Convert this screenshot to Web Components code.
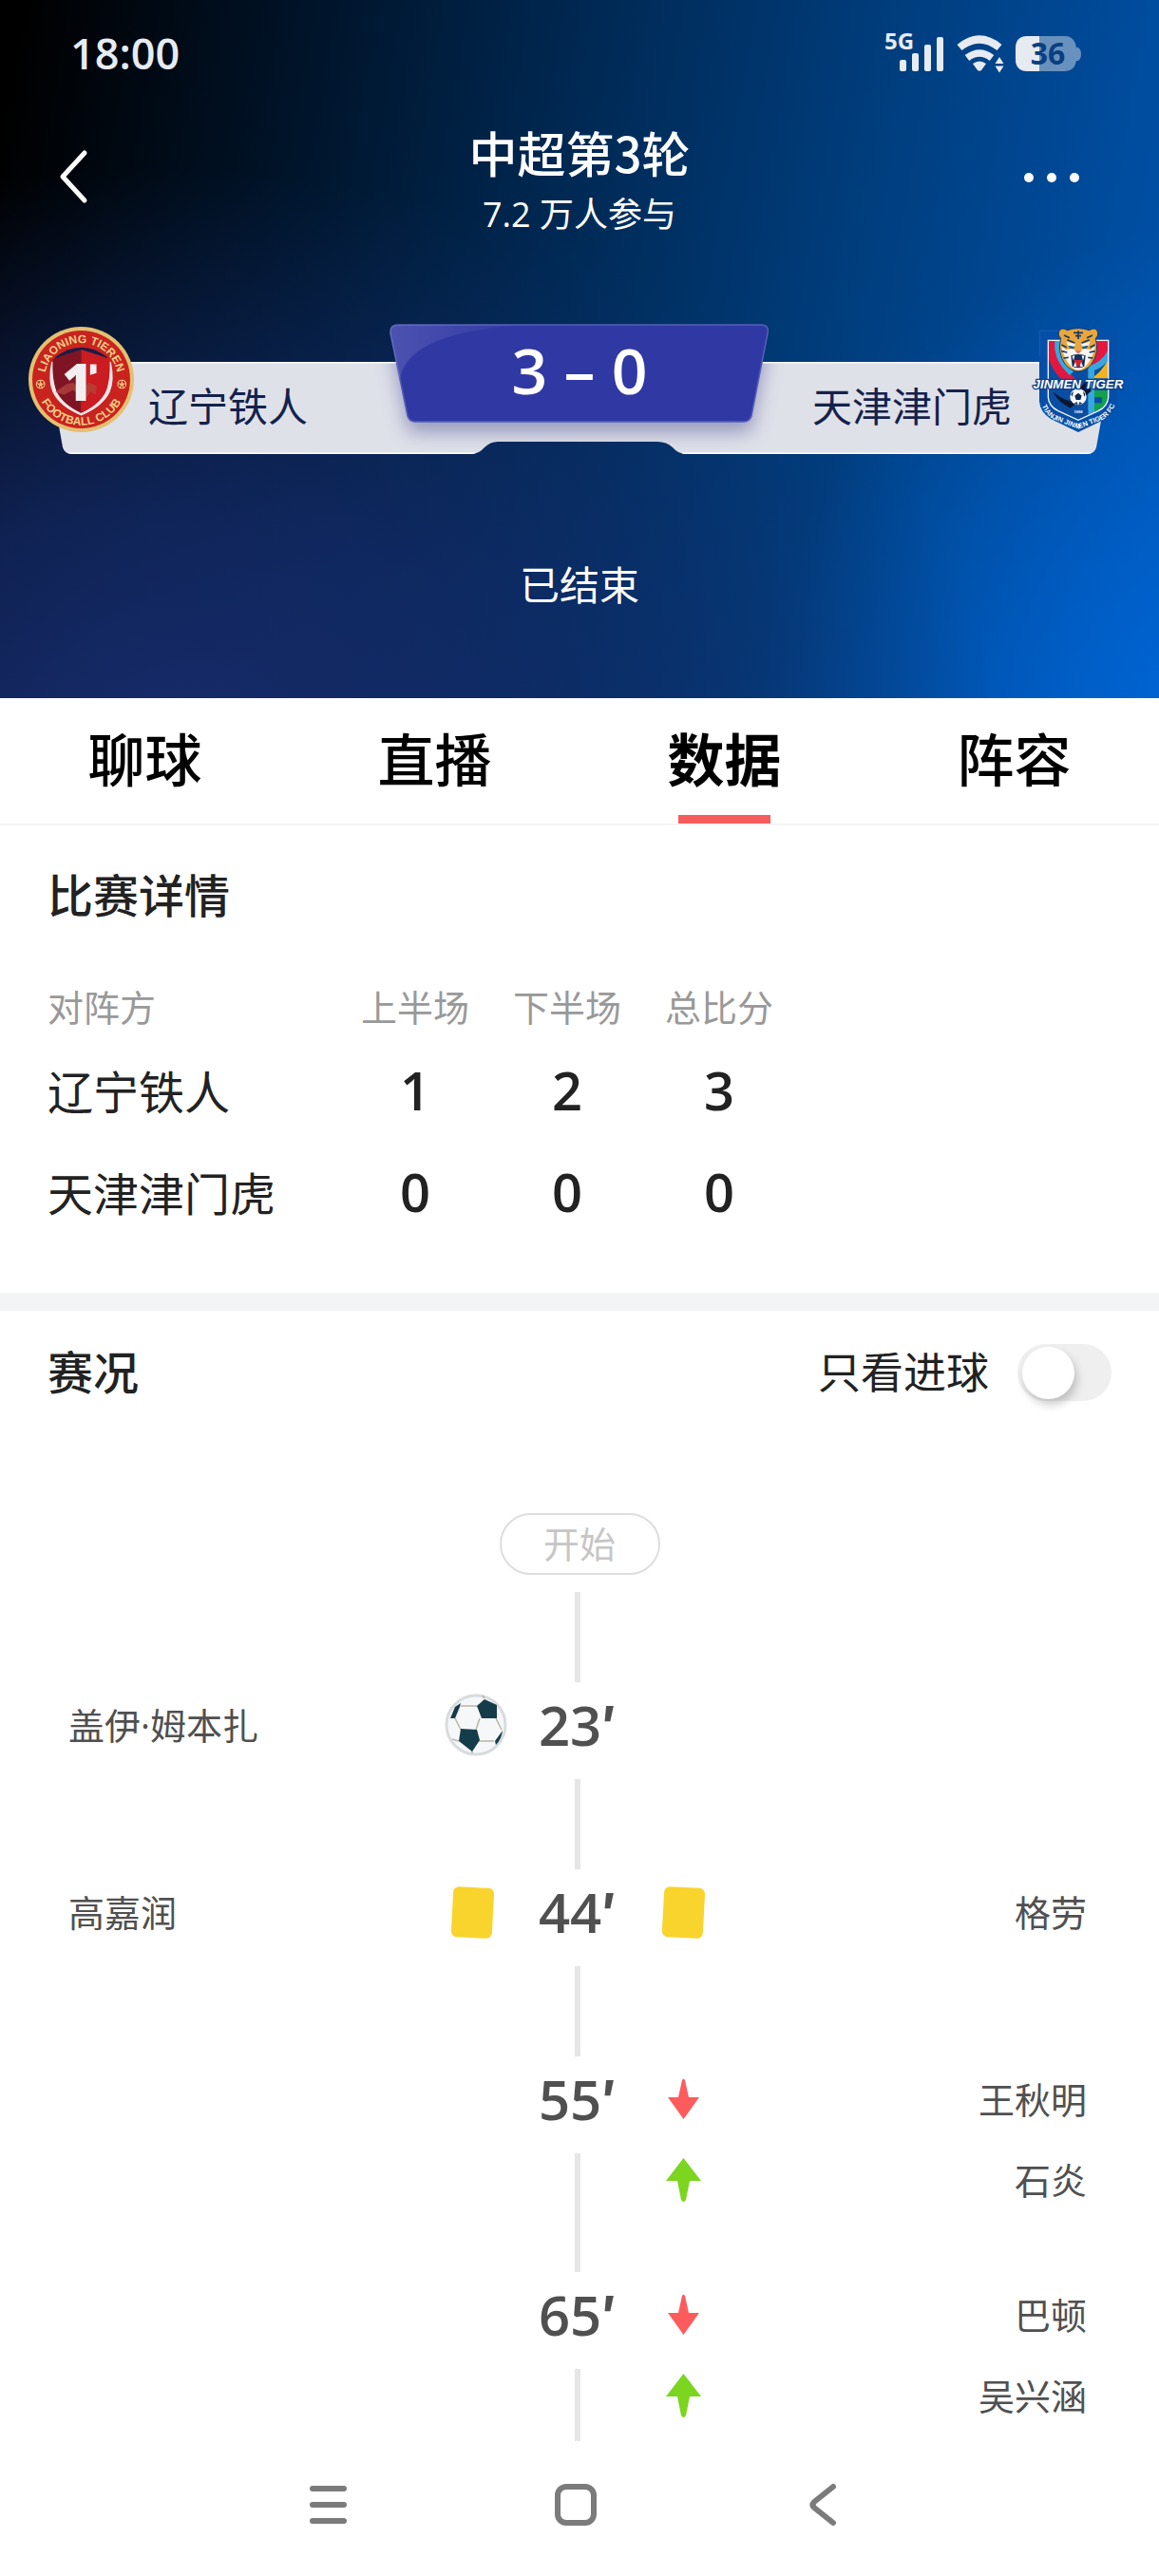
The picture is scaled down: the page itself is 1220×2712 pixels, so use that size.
<!DOCTYPE html>
<html lang="zh-CN">
<head>
<meta charset="utf-8">
<meta name="viewport" content="width=device-width, initial-scale=1">
<title>中超第3轮</title>
<style>
    html, body {
        margin: 0;
        height: 100%;
        background: #fff;
    }
    body {
        font-family: "Open Sans", "Noto Sans CJK SC", sans-serif;
        color: #222;
    }
</style>
</head>
<body>
<match-page>
    <status-bar slot="header" time="18:00" battery="36"></status-bar>
    <title-bar slot="header">
        中超第3轮
        <span slot="sub">7.2 万人参与</span>
    </title-bar>
    <score-board slot="header" score="3 – 0">
        <liaoning-badge slot="home-badge"></liaoning-badge>
        <span slot="home">辽宁铁人</span>
        <span slot="away">天津津门虎</span>
        <tianjin-badge slot="away-badge"></tianjin-badge>
        <span slot="state">已结束</span>
    </score-board>
    <tab-bar tabs="聊球,直播,数据,阵容" active="数据"></tab-bar>
    <match-details></match-details>
    <match-timeline>
        <timeline-event time="23">
            <timeline-player slot="home" icon="goal">盖伊·姆本扎</timeline-player>
        </timeline-event>
        <timeline-event time="44">
            <timeline-player slot="home" icon="card">高嘉润</timeline-player>
            <timeline-player slot="away" icon="card">格劳</timeline-player>
        </timeline-event>
        <timeline-event time="55">
            <timeline-player slot="away" icon="down">王秋明</timeline-player>
            <timeline-player slot="away" icon="up">石炎</timeline-player>
        </timeline-event>
        <timeline-event time="65">
            <timeline-player slot="away" icon="down">巴顿</timeline-player>
            <timeline-player slot="away" icon="up">吴兴涵</timeline-player>
        </timeline-event>
    </match-timeline>
    <system-nav slot="nav"></system-nav>
</match-page>

<script>
class BaseElement extends HTMLElement {

    connectedCallback() {
        if (!this.shadowRoot)
            this.attachShadow({mode: 'open'}).innerHTML = this.template;
    }
}

class MatchPage extends BaseElement {
    get template() {
        return `
        <style>
            :host {
                display: flex;
                flex-direction: column;
                height: 100vh;
            }
            header {
                flex: none;
                color: #fff;
                background:
                    radial-gradient(ellipse 72% 82% at 14% 106%, rgba(24, 44, 110, .95), rgba(20, 43, 106, .75) 40%, rgba(10, 40, 96, 0)),
                    radial-gradient(ellipse 40% 72% at 106% 104%, #0066d8, rgba(0, 96, 204, 0)),
                    linear-gradient(100deg, #000 2%, #00142a 25%, #002a56 48%, #003f80 72%, #0053ae);
            }
            main {
                flex: 1;
                min-height: 0;
                overflow: hidden;
            }
        </style>
        <header><slot name="header"></slot></header>
        <main><slot></slot></main>
        <slot name="nav"></slot>
        `;
    }
}

class StatusBar extends BaseElement {
    get template() {
        return `
        <style>
            :host {
                display: flex;
                align-items: center;
                justify-content: space-between;
                height: 112px;
                padding: 0 82px 0 74px;
                color: #e6ebf2;
            }
            time {
                font-size: 45px;
                line-height: 60px;
                font-weight: 600;
            }
            .icons {
                display: flex;
                gap: 13px;
            }
            svg {
                display: block;
                overflow: visible;
                fill: currentColor;
            }
        </style>
        <time>${this.getAttribute('time')}</time>
        <div class="icons">${signalIcon}${wifiIcon}${batteryIcon(this.getAttribute('battery'))}</div>
        `;
    }
}

class TitleBar extends BaseElement {
    get template() {
        return `
        <style>
            :host {
                display: grid;
                grid-template-columns: 180px 1fr 180px;
                align-items: center;
                height: 148px;
            }
            .title {
                text-align: center;
            }
            h1 {
                margin: 0;
                font-family: "Noto Sans CJK SC", sans-serif;
                font-size: 51px;
                line-height: 80px;
                font-weight: 500;
            }
            p {
                margin: 0;
                font-size: 36px;
                line-height: 52px;
            }
            button {
                display: flex;
                padding: 24px 60px;
                border: 0;
                background: none;
                color: inherit;
            }
            .more {
                justify-self: end;
                padding: 24px 82px 24px 0;
            }
        </style>
        <button aria-label="返回">
            <svg width="34" height="60" viewBox="0 0 34 60" fill="none" stroke="currentColor" stroke-width="5" stroke-linecap="round" stroke-linejoin="round"><path d="M29 5L6 30L29 55"/></svg>
        </button>
        <div class="title">
            <h1><slot></slot></h1>
            <p><slot name="sub"></slot></p>
        </div>
        <button class="more" aria-label="更多">
            <svg width="60" height="14" viewBox="0 0 60 14" fill="currentColor"><circle cx="5" cy="8" r="5"/><circle cx="29" cy="8" r="5"/><circle cx="53" cy="8" r="5"/></svg>
        </button>
        `;
    }
}

class ScoreBoard extends BaseElement {
    get template() {
        return `
        <style>
            :host {
                display: block;
                padding: 81px 0 87px;
            }
            .board {
                display: grid;
                height: 137px;
            }
            .shape, .teams {
                grid-area: 1 / 1;
            }
            .shape {
                display: block;
                width: 100%;
                height: 150px;
            }
            .teams {
                position: relative;
                display: grid;
                grid-template-columns: 1fr auto 1fr;
                align-items: start;
                padding: 0 30px;
            }
            .team {
                display: flex;
                gap: 15px;
                color: #14224b;
                font-size: 42px;
                line-height: 60px;
            }
            .away {
                justify-content: flex-end;
            }
            .name {
                padding-top: 57px;
            }
            strong {
                font-size: 66px;
                line-height: 96px;
                font-weight: 600;
            }
            p {
                margin: 108px 0 0;
                padding-bottom: 2px;
                font-size: 42px;
                line-height: 60px;
                text-align: center;
            }
        </style>
        <div class="board">
            ${boardShape}
            <div class="teams">
                <div class="team">
                    <slot name="home-badge"></slot>
                    <span class="name"><slot name="home"></slot></span>
                </div>
                <strong>${this.getAttribute('score')}</strong>
                <div class="team away">
                    <span class="name"><slot name="away"></slot></span>
                    <slot name="away-badge"></slot>
                </div>
            </div>
        </div>
        <p><slot name="state"></slot></p>
        `;
    }
}

class LiaoningBadge extends BaseElement {
    get template() {
        return `
        <style>
            :host { display: block; padding-top: 3px; }
            svg { display: block; }
            text { font-family: "Liberation Sans", sans-serif; font-weight: 700; }
        </style>
        <svg width="111" height="111" viewBox="0 0 332 332">
            <defs>
                <path id="top" d="M51 166A115 115 0 0 1 281 166"/>
                <path id="bottom" d="M22 166A144 144 0 0 0 310 166"/>
            </defs>
            <circle cx="166" cy="166" r="166" fill="#e3c070"/>
            <circle cx="166" cy="166" r="154" fill="#c9231f"/>
            <path d="M84 96Q166 34 248 96L248 112H84Z" fill="#1b1c48"/>
            <path d="M72 112Q60 170 76 206Q98 252 166 280Q234 252 256 206Q272 170 260 112L248 104V190Q236 236 166 270Q96 236 84 190V104Z" fill="#f4e6ea"/>
            <path d="M166 72Q120 86 76 102Q74 170 88 202Q106 244 166 272Z" fill="#7f1524"/>
            <path d="M166 72Q212 86 256 102Q258 170 244 202Q226 244 166 272Z" fill="#cb1c21"/>
            <path d="M84 206L118 182L140 176L166 196L190 176L214 186L212 214L196 204L180 226L140 200L112 214Z" fill="#b3453d" opacity=".75"/>
            <text x="106" y="234" font-size="162" fill="#f3eef0" style="font-family: 'Open Sans'; font-weight: 800">1</text>
            <path d="M194 118H214V146L194 152Z" fill="#f3eef0"/>
            <g fill="#f1cf86" font-size="36" text-anchor="middle">
                <text><textPath href="#top" startOffset="50%">LIAONING TIEREN</textPath></text>
                <text><textPath href="#bottom" startOffset="50%">FOOTBALL CLUB</textPath></text>
            </g>
            <g fill="none" stroke="#f1cf86" stroke-width="3">
                <circle cx="38" cy="181" r="13"/><path d="M38 169V177M27 178L34 182M49 178L42 182M32 191L36 185M44 191L40 185"/>
                <circle cx="294" cy="181" r="13"/><path d="M294 169V177M283 178L290 182M305 178L298 182M288 191L292 185M300 191L296 185"/>
            </g>
            <circle cx="38" cy="181" r="5" fill="#f1cf86"/>
            <circle cx="294" cy="181" r="5" fill="#f1cf86"/>
        </svg>
        `;
    }
}

class TianjinBadge extends BaseElement {
    get template() {
        return `
        <style>
            :host { display: block; margin-top: -6px; }
            svg { display: block; overflow: visible; }
            text { font-family: "Liberation Sans", sans-serif; font-weight: 700; }
        </style>
        <svg width="110" height="130" viewBox="0 0 330 390">
            <defs>
                <path id="rim" d="M48 238V262Q50 296 88 320L165 350L242 320Q278 296 284 262V236"/>
                <clipPath id="inner"><path d="M72 72H258V250Q256 276 226 292L165 320L104 292Q74 276 72 250Z"/></clipPath>
            </defs>
            <path d="M42 38H288V262Q286 296 252 318L165 360L78 318Q44 296 42 262Z" fill="#064fa9"/>
            <path d="M43 120V39H112" fill="none" stroke="#3d7cc4" stroke-width="1"/>
            <g clip-path="url(#inner)">
                <rect x="68" y="68" width="194" height="260" fill="#0a4ea3"/>
                <path d="M68 68H120Q86 120 140 176L165 200H120Q60 150 68 68Z" fill="#e5173f"/>
                <path d="M92 68H120Q104 120 150 168L138 180Q82 130 92 68Z" fill="#35a8e0"/>
                <path d="M210 68H262V110Q240 150 196 156Z" fill="#e5173f"/>
                <path d="M262 96V130Q240 160 206 168L196 152Q240 140 262 96Z" fill="#35a8e0"/>
                <path d="M262 126V190H206Q240 170 262 126Z" fill="#f4b21b"/>
                <path d="M196 158H216V320H196Z" fill="#35a8e0"/>
                <path d="M216 228H262V262L216 302V268H240V250H216Z" fill="#12a14a"/>
                <path d="M84 232Q120 262 148 262L160 232L196 190L206 230L140 284Q104 268 84 232Z" fill="#0c1630"/>
                <path d="M72 240Q96 284 165 300L196 290V312L165 322L100 292Z" fill="#0a4ea3"/>
            </g>
            <path d="M70 70H260V250Q258 278 228 293L165 322L102 293Q72 278 70 250Z" fill="none" stroke="#f2f5fa" stroke-width="4"/>
            <path d="M106 38Q116 28 130 38Q165 26 200 38Q216 28 224 38Q232 52 220 64Q232 110 206 146Q186 168 165 168Q144 168 124 146Q98 110 110 64Q98 52 106 38Z" fill="#e9a63c" stroke="#153d72" stroke-width="3"/>
            <path d="M112 88Q118 126 140 150Q152 164 165 164Q178 164 190 150Q212 126 218 88L204 100L184 96L165 106L146 96L126 100Z" fill="#f8f5ef"/>
            <path d="M128 74L156 82L150 92L132 86ZM202 74L174 82L180 92L198 86Z" fill="#f8f5ef"/>
            <path d="M150 46H180M156 56H174M165 40V66M120 54L138 62M210 54L192 62M112 84L128 92M218 84L202 92M112 104L130 108M218 104L200 108M118 126L134 124M212 126L196 124M130 68L154 78M200 68L176 78" stroke="#163a66" stroke-width="5" fill="none"/>
            <path d="M134 86L154 90L150 97L138 95ZM196 86L176 90L180 97L192 95Z" fill="#15608f"/>
            <path d="M154 102H176L165 114Z" fill="#e0796b"/>
            <path d="M142 118Q165 110 188 118L184 152Q165 162 146 152Z" fill="#14305c"/>
            <path d="M152 132H178L174 150Q165 156 156 150Z" fill="#d2222f"/>
            <path d="M146 119L154 118L150 134ZM184 119L176 118L180 134ZM150 152L156 138L160 154ZM180 152L174 138L170 154Z" fill="#fff"/>
            <circle cx="165" cy="248" r="26" fill="#f6f8fb"/>
            <path d="M165 236L176 245L172 258H158L154 245ZM142 240L150 230L146 248ZM188 240L180 230L184 248ZM152 270L160 264L164 273ZM178 270L170 264L166 273Z" fill="#10264e"/>
            <text x="165" y="221" font-size="40" font-style="italic" text-anchor="middle" fill="#fff" stroke="#0b3f8c" stroke-width="8" paint-order="stroke">JINMEN TIGER</text>
            <text x="165" y="300" font-size="12" text-anchor="middle" fill="#fff">1998</text>
            <text font-size="22" fill="#fff" text-anchor="middle"><textPath href="#rim" startOffset="50%">TIANJIN JINMEN TIGER FC</textPath></text>
        </svg>
        `;
    }
}

class TabBar extends BaseElement {

    connectedCallback() {
        super.connectedCallback();
        this.shadowRoot.addEventListener('click', e => this.clickHandler(e));
    }

    clickHandler(e) {
        const tab = e.target.closest('button');
        if (!tab) return;
        this.setAttribute('active', tab.textContent);
        this.shadowRoot.innerHTML = this.template;
    }

    get template() {
        const active = this.getAttribute('active');
        return `
        <style>
            :host {
                display: block;
                border-bottom: 2px solid #f4f4f4;
            }
            nav {
                display: flex;
            }
            button {
                flex: 1;
                padding: 8px 0 0;
                border: 0;
                background: none;
                font: 500 60px/115px "Open Sans", "Noto Sans CJK SC", sans-serif;
                color: #000;
            }
            button::after {
                content: "";
                display: block;
                width: 97px;
                height: 9px;
                margin: 0 auto;
            }
            button[aria-selected="true"] {
                font-weight: 700;
            }
            button[aria-selected="true"]::after {
                background: #f75c5d;
            }
        </style>
        <nav role="tablist">
            ${this.getAttribute('tabs').split(',').map(name =>
                `<button role="tab" aria-selected="${name === active}">${name}</button>`).join('')}
        </nav>
        `;
    }
}

class MatchDetails extends BaseElement {
    get template() {
        return `
        <style>
            :host {
                display: block;
                padding: 44px 50px 54px;
                border-bottom: 19px solid #f2f4f5;
            }
            h2 {
                margin: 0 0 59px;
                font-size: 48px;
                line-height: 60px;
                font-weight: 500;
            }
            table {
                border-collapse: collapse;
            }
            th, td {
                padding: 0;
                width: 160px;
                text-align: center;
            }
            thead th {
                height: 56px;
                padding-bottom: 5px;
                font-size: 38px;
                line-height: 56px;
                font-weight: 400;
                color: #999;
                white-space: nowrap;
            }
            tbody th {
                font-size: 48px;
                font-weight: 400;
            }
            th:first-child {
                width: 307px;
                text-align: left;
            }
            td {
                height: 107px;
                font-size: 56px;
                line-height: 60px;
                font-weight: 600;
            }
        </style>
        <h2>比赛详情</h2>
        <table>
            <thead>
                <tr><th>对阵方</th><th>上半场</th><th>下半场</th><th>总比分</th></tr>
            </thead>
            <tbody>
                <tr><th>辽宁铁人</th><td>1</td><td>2</td><td>3</td></tr>
                <tr><th>天津津门虎</th><td>0</td><td>0</td><td>0</td></tr>
            </tbody>
        </table>
        `;
    }
}

class MatchTimeline extends BaseElement {
    get template() {
        return `
        <style>
            :host {
                display: block;
            }
            .head {
                display: flex;
                align-items: center;
                justify-content: space-between;
                height: 130px;
                padding: 0 50px;
            }
            h2 {
                margin: 0;
                font-size: 48px;
                line-height: 60px;
                font-weight: 500;
            }
            label {
                display: flex;
                align-items: center;
                gap: 30px;
                font-size: 45px;
                line-height: 60px;
            }
            input {
                appearance: none;
                display: flex;
                align-items: center;
                width: 99px;
                height: 60px;
                margin: 0;
                padding: 0 5px;
                border-radius: 30px;
                background: #efefef;
            }
            input::before {
                content: "";
                width: 55px;
                height: 55px;
                border-radius: 50%;
                background: #fff;
                box-shadow: 3px 6px 10px rgba(0, 0, 0, .2);
            }
            input:checked {
                justify-content: flex-end;
                background: #f75c5d;
            }
            .start {
                width: 165px;
                margin: 83px auto 18px;
                border: 2px solid #dedede;
                border-radius: 33px;
                font-size: 38px;
                line-height: 61px;
                text-align: center;
                color: #c6c6c6;
            }
            .events {
                display: flex;
                flex-direction: column;
                padding: 0 76px 0 72px;
            }
            .line {
                align-self: center;
                width: 6px;
                height: 95px;
                background: #e6e6e6;
            }
        </style>
        <div class="head">
            <h2>赛况</h2>
            <label>只看进球<input type="checkbox" role="switch"></label>
        </div>
        <div class="start">开始</div>
        <div class="events">
            <div class="line"></div>
            <slot></slot>
        </div>
        `;
    }
}

class TimelineEvent extends BaseElement {
    get template() {
        return `
        <style>
            :host {
                display: grid;
                grid-template-columns: 1fr 158px 1fr;
                min-height: 197px;
                color: #505050;
            }
            .side {
                padding: 2px 0 55px;
            }
            .centre {
                display: flex;
                flex-direction: column;
                align-items: center;
            }
            time {
                padding-bottom: 11px;
                font-size: 58px;
                line-height: 90px;
                font-weight: 600;
            }
            .minute {
                font-family: Inter, "Open Sans", sans-serif;
                font-weight: 700;
            }
            .centre::after {
                content: "";
                flex: 1;
                width: 6px;
                background: #e6e6e6;
            }
        </style>
        <div class="side"><slot name="home"></slot></div>
        <div class="centre"><time>${this.getAttribute('time')}<span class="minute">′</span></time></div>
        <div class="side"><slot name="away"></slot></div>
        `;
    }
}

class TimelinePlayer extends BaseElement {
    get template() {
        return `
        <style>
            :host {
                display: flex;
                align-items: center;
                justify-content: space-between;
                height: 85px;
                font-size: 38px;
                line-height: 56px;
            }
            :host([slot="away"]) {
                flex-direction: row-reverse;
            }
            svg {
                display: block;
                overflow: visible;
            }
        </style>
        <span><slot></slot></span>
        ${playerIcons[this.getAttribute('icon')]}
        `;
    }
}

class SystemNav extends BaseElement {
    get template() {
        return `
        <style>
            :host {
                flex: none;
                display: flex;
                align-items: center;
                justify-content: center;
                gap: 200px;
                height: 134px;
                padding: 0 8px 8px 0;
                background: #fff;
            }
            button {
                display: flex;
                padding: 0;
                border: 0;
                background: none;
            }
            svg {
                fill: none;
                stroke: #7b7b7b;
                stroke-width: 6;
                stroke-linecap: round;
                stroke-linejoin: round;
            }
        </style>
        <button aria-label="菜单"><svg width="60" height="60" viewBox="0 0 60 60"><path d="M13 13H46M13 30H46M13 47H46"/></svg></button>
        <button aria-label="主页"><svg width="60" height="60" viewBox="0 0 60 60"><rect x="11" y="11" width="38" height="38" rx="9"/></svg></button>
        <button aria-label="返回"><svg width="60" height="60" viewBox="0 0 60 60"><path d="M41 11L21 27Q18 30 21 33L41 49"/></svg></button>
        `;
    }
}

const signalIcon = `
<svg width="62" height="40" viewBox="0 0 62 40" role="img" aria-label="信号">
<text x="-1" y="16" font-size="24" font-weight="700">5G</text>
<rect x="15" y="27" width="7" height="12" rx="2"></rect><rect x="28" y="20" width="7" height="19" rx="2"></rect><rect x="41" y="11" width="7" height="28" rx="2"></rect><rect x="54" y="3" width="7" height="36" rx="2"></rect>
</svg>`;

const wifiIcon = `
<svg width="49" height="40" viewBox="0 0 49 40" role="img" aria-label="无线网络">
<path d="M3 14Q24 -3 45 14" fill="none" stroke="currentColor" stroke-width="8"></path>
<path d="M11 25Q24 15 37 25" fill="none" stroke="currentColor" stroke-width="7.5"></path>
<path d="M17 31Q24 26 31 31L26 38Q24 39.500 22 38Z"></path>
<path d="M45 24L49.500 31H40.500ZM45 40.500L49.500 33.500H40.500Z"></path>
</svg>`;

const batteryIcon = level => `
<svg width="69" height="40" viewBox="0 0 69 40" role="img" aria-label="电量">
<path d="M13 2H52Q62 2 64 14H66Q69 16 69 21Q69 26 66 28H64Q62 39 52 39H13Q0 39 0 26V15Q0 2 13 2Z" opacity=".45"></path>
<path d="M13 2H25V39H13Q0 39 0 26V15Q0 2 13 2Z"></path>
<text x="34" y="32" font-size="32" font-weight="700" text-anchor="middle" fill="#0a3f80">${level}</text>
</svg>`;

const boardShape = `
<svg class="shape" viewBox="0 0 1220 150" preserveAspectRatio="none" aria-hidden="true">
<defs>
<filter id="shadow" x="-10%" y="-20%" width="120%" height="150%"><feGaussianBlur stdDeviation="10"/></filter>
<linearGradient id="shine"><stop offset="0" stop-color="#fff" stop-opacity=".13"/><stop offset="1" stop-color="#fff" stop-opacity="0"/></linearGradient>
<clipPath id="bar"><path d="M50 40H1170L1154 130Q1152 137 1144 137H722Q714 137 708 130Q702 124 692 124H524Q516 124 510 130Q504 137 496 137H76Q68 137 66 130Z"/></clipPath>
</defs>
<path d="M50 40H1170L1154 130Q1152 137 1144 137H722Q714 137 708 130Q702 124 692 124H524Q516 124 510 130Q504 137 496 137H76Q68 137 66 130Z" fill="#dfe1e9"/>
<g clip-path="url(#bar)">
<path d="M410 14H810L790 114H430Z" fill="#4c4f92" opacity=".5" filter="url(#shadow)"/>
<path d="M50 40.500H1170M60 136.500H500M718 136.500H1150" stroke="#fff" stroke-width="2"/>
</g>
<path d="M419 1H801Q810 1 808 10L791 97Q789 103 783 103H437Q431 103 429 97L411 10Q410 1 419 1Z" fill="#3038a3" stroke="#5560b8" stroke-width="1.500"/>
<path d="M419 1H560Q440 6 423 50L421 58L411 10Q410 1 419 1Z" fill="url(#shine)"/>
</svg>`;

const playerIcons = {
    goal: `
    <svg width="64" height="66" viewBox="-3 0 64 66" role="img" aria-label="进球">
    <circle cx="33" cy="33" r="31" fill="#f6f7f8" stroke="#d8dcde" stroke-width="3"></circle>
    <path d="M17 13L36 13M11 26L17 38M37 26L33 38M54 26L60 38M36 50H52M15 50L8 48M29 60V63M42 5L40 2" stroke="#b9b6a4" stroke-width="1.500" fill="none"></path>
    <path d="M42 6L55 12V26H39L34 13ZM17 37L34 38L37 49L29 61L15 50ZM6 26L11 14L17 10L16 14L11 26ZM61 39L53 50L54 54Q60 48 61 39Z" fill="#143c49"></path>
    </svg>`,
    card: `
    <svg width="64" height="66" viewBox="0 0 64 66" role="img" aria-label="黄牌">
    <rect x="11" y="7" width="43" height="53" rx="6" fill="#f9d42d" transform="rotate(3 32 33)"></rect>
    </svg>`,
    down: `
    <svg width="64" height="66" viewBox="0 0 64 66" role="img" aria-label="换下">
    <path d="M31 13Q32.500 10 34 13L38 31H49L32.500 54L16 31H27Z" fill="#fe5b5c"></path>
    </svg>`,
    up: `
    <svg width="64" height="66" viewBox="0 0 64 66" role="img" aria-label="换上">
    <path d="M32.500 10L51 34H39L35 54Q32.500 58 30 54L26 34H14Z" fill="#7cd51e"></path>
    </svg>`
};

customElements.define('match-page', MatchPage);
customElements.define('status-bar', StatusBar);
customElements.define('title-bar', TitleBar);
customElements.define('score-board', ScoreBoard);
customElements.define('liaoning-badge', LiaoningBadge);
customElements.define('tianjin-badge', TianjinBadge);
customElements.define('tab-bar', TabBar);
customElements.define('match-details', MatchDetails);
customElements.define('match-timeline', MatchTimeline);
customElements.define('timeline-event', TimelineEvent);
customElements.define('timeline-player', TimelinePlayer);
customElements.define('system-nav', SystemNav);
</script>
</body>
</html>
